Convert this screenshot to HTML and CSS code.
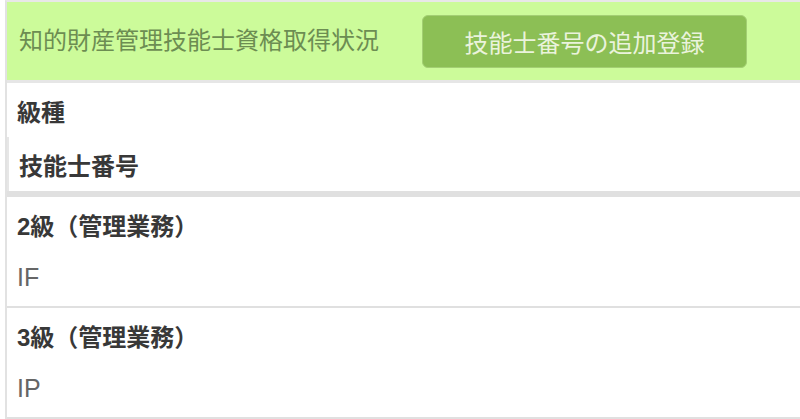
FILE: index.html
```html
<!DOCTYPE html>
<html lang="ja">
<head>
    <meta charset="UTF-8">
    <meta name="viewport" content="width=device-width, initial-scale=1.0">
    <title>知的財産管理技能士資格取得状況</title>
    <link rel="stylesheet" href="styles.css">
</head>
<body>
<div class="panel">
    <div class="header">
        <h2 class="title">知的財産管理技能士資格取得状況</h2>
        <button class="add-btn">技能士番号の追加登録</button>
    </div>
    <div class="columns">
        <div class="col-label">級種</div>
        <div class="col-label sub">技能士番号</div>
    </div>
    <div class="cert">
        <div class="cert-grade">2級（管理業務）</div>
        <div class="cert-number">IF</div>
    </div>
    <div class="cert">
        <div class="cert-grade">3級（管理業務）</div>
        <div class="cert-number">IP</div>
    </div>
</div>
</body>
</html>
```

FILE: styles.css
```css
body {
    margin: 0;
    background-color: #fff;
    font-family: "Liberation Sans", "Noto Sans CJK JP", sans-serif;
    font-size: 24px;
    color: #383838;
}
.panel {
    margin-left: 5px;
    border-left: 2px solid #e2e2e2;
    border-top: 2px solid #e8e8e8;
}
.header {
    display: flex;
    align-items: center;
    height: 78px;
    padding-left: 12px;
    background-color: #ccfb9a;
    border-bottom: 3px solid #e6e6e6;
}
.title {
    margin: 0;
    font-size: 24px;
    font-weight: normal;
    color: #6c8d52;
    line-height: 1;
}
.add-btn {
    margin-left: 43px;
    width: 325px;
    height: 53px;
    padding: 0;
    background-color: #8cbf55;
    border: 1px solid #a3cf73;
    border-radius: 6px;
    color: #eaf3dc;
    font-family: inherit;
    font-size: 24px;
}
.columns {
    border-bottom: 6px solid #e0e0e0;
}
.col-label {
    display: flex;
    align-items: center;
    height: 54px;
    padding-left: 10px;
    font-weight: bold;
}
.col-label.sub {
    border-left: 2px solid #e6e6e6;
}
.cert {
    padding: 4px 0 3px 10px;
    border-bottom: 2px solid #e0e0e0;
}
.cert-grade {
    line-height: 51px;
    font-weight: bold;
}
.cert-number {
    line-height: 51px;
    font-size: 25px;
    color: #666;
}
```
